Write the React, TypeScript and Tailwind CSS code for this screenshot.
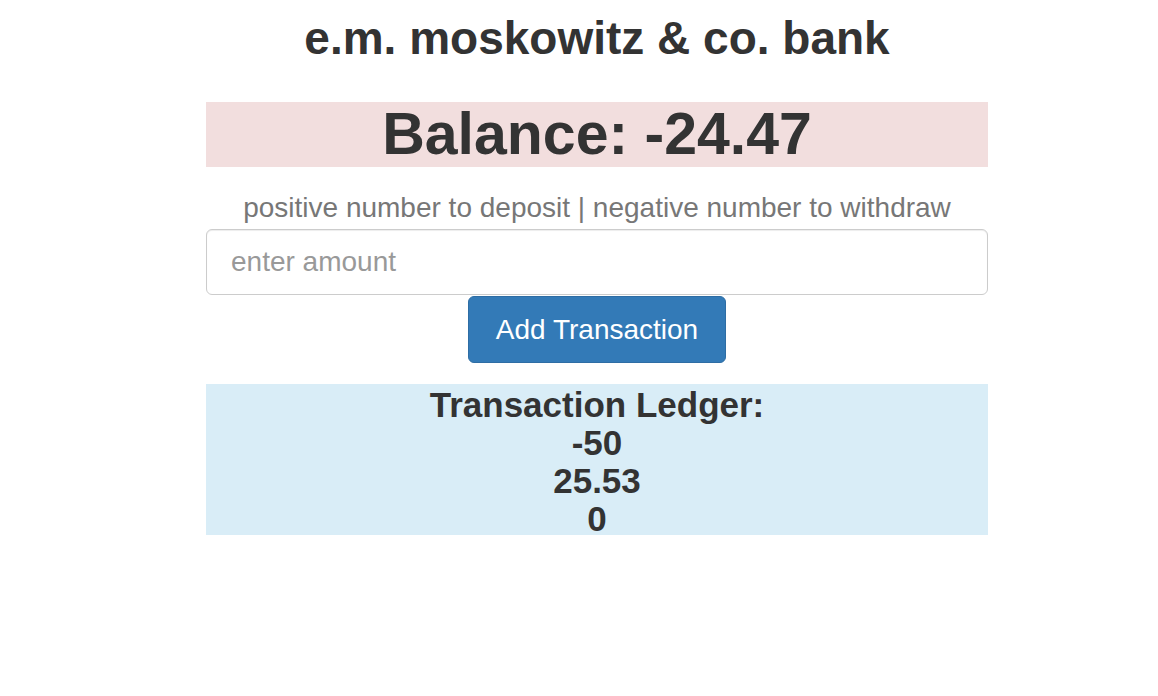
export default function App() {
  const ledger = ["-50", "25.53", "0"];
  return (
    <div className="min-h-[696px] bg-white text-[#333] font-['Liberation_Sans',Arial,sans-serif]">
      <div className="ml-[206px] w-[782px] flex flex-col items-center">
        <h1 className="mt-[14px] text-[46px] leading-[48px] font-bold">e.m. moskowitz &amp; co. bank</h1>

        <div className="mt-[40px] w-full h-[65px] bg-[#f2dede] flex items-center justify-center">
          <span className="text-[59px] leading-none font-bold">Balance: -24.47</span>
        </div>

        <p className="mt-[26px] text-[28px] leading-[30px] text-[#777]">
          positive number to deposit | negative number to withdraw
        </p>

        <input
          type="text"
          placeholder="enter amount"
          className="mt-[6px] w-full h-[66px] rounded-[6px] border border-[#ccc] px-[24px] text-[28px] placeholder:text-[#999] outline-none shadow-[inset_0_1px_1px_rgba(0,0,0,0.075)]"
        />

        <button className="mt-[1px] w-[258px] h-[67px] rounded-[6px] bg-[#337ab7] border border-[#2e6da4] text-white text-[28px]">
          Add Transaction
        </button>

        <div className="mt-[21px] w-full h-[151px] bg-[#d9edf7] flex flex-col items-center pt-[2px] text-[35px] leading-[38px] font-bold">
          <div>Transaction Ledger:</div>
          {ledger.map((t, i) => (
            <div key={i}>{t}</div>
          ))}
        </div>
      </div>
    </div>
  );
}
